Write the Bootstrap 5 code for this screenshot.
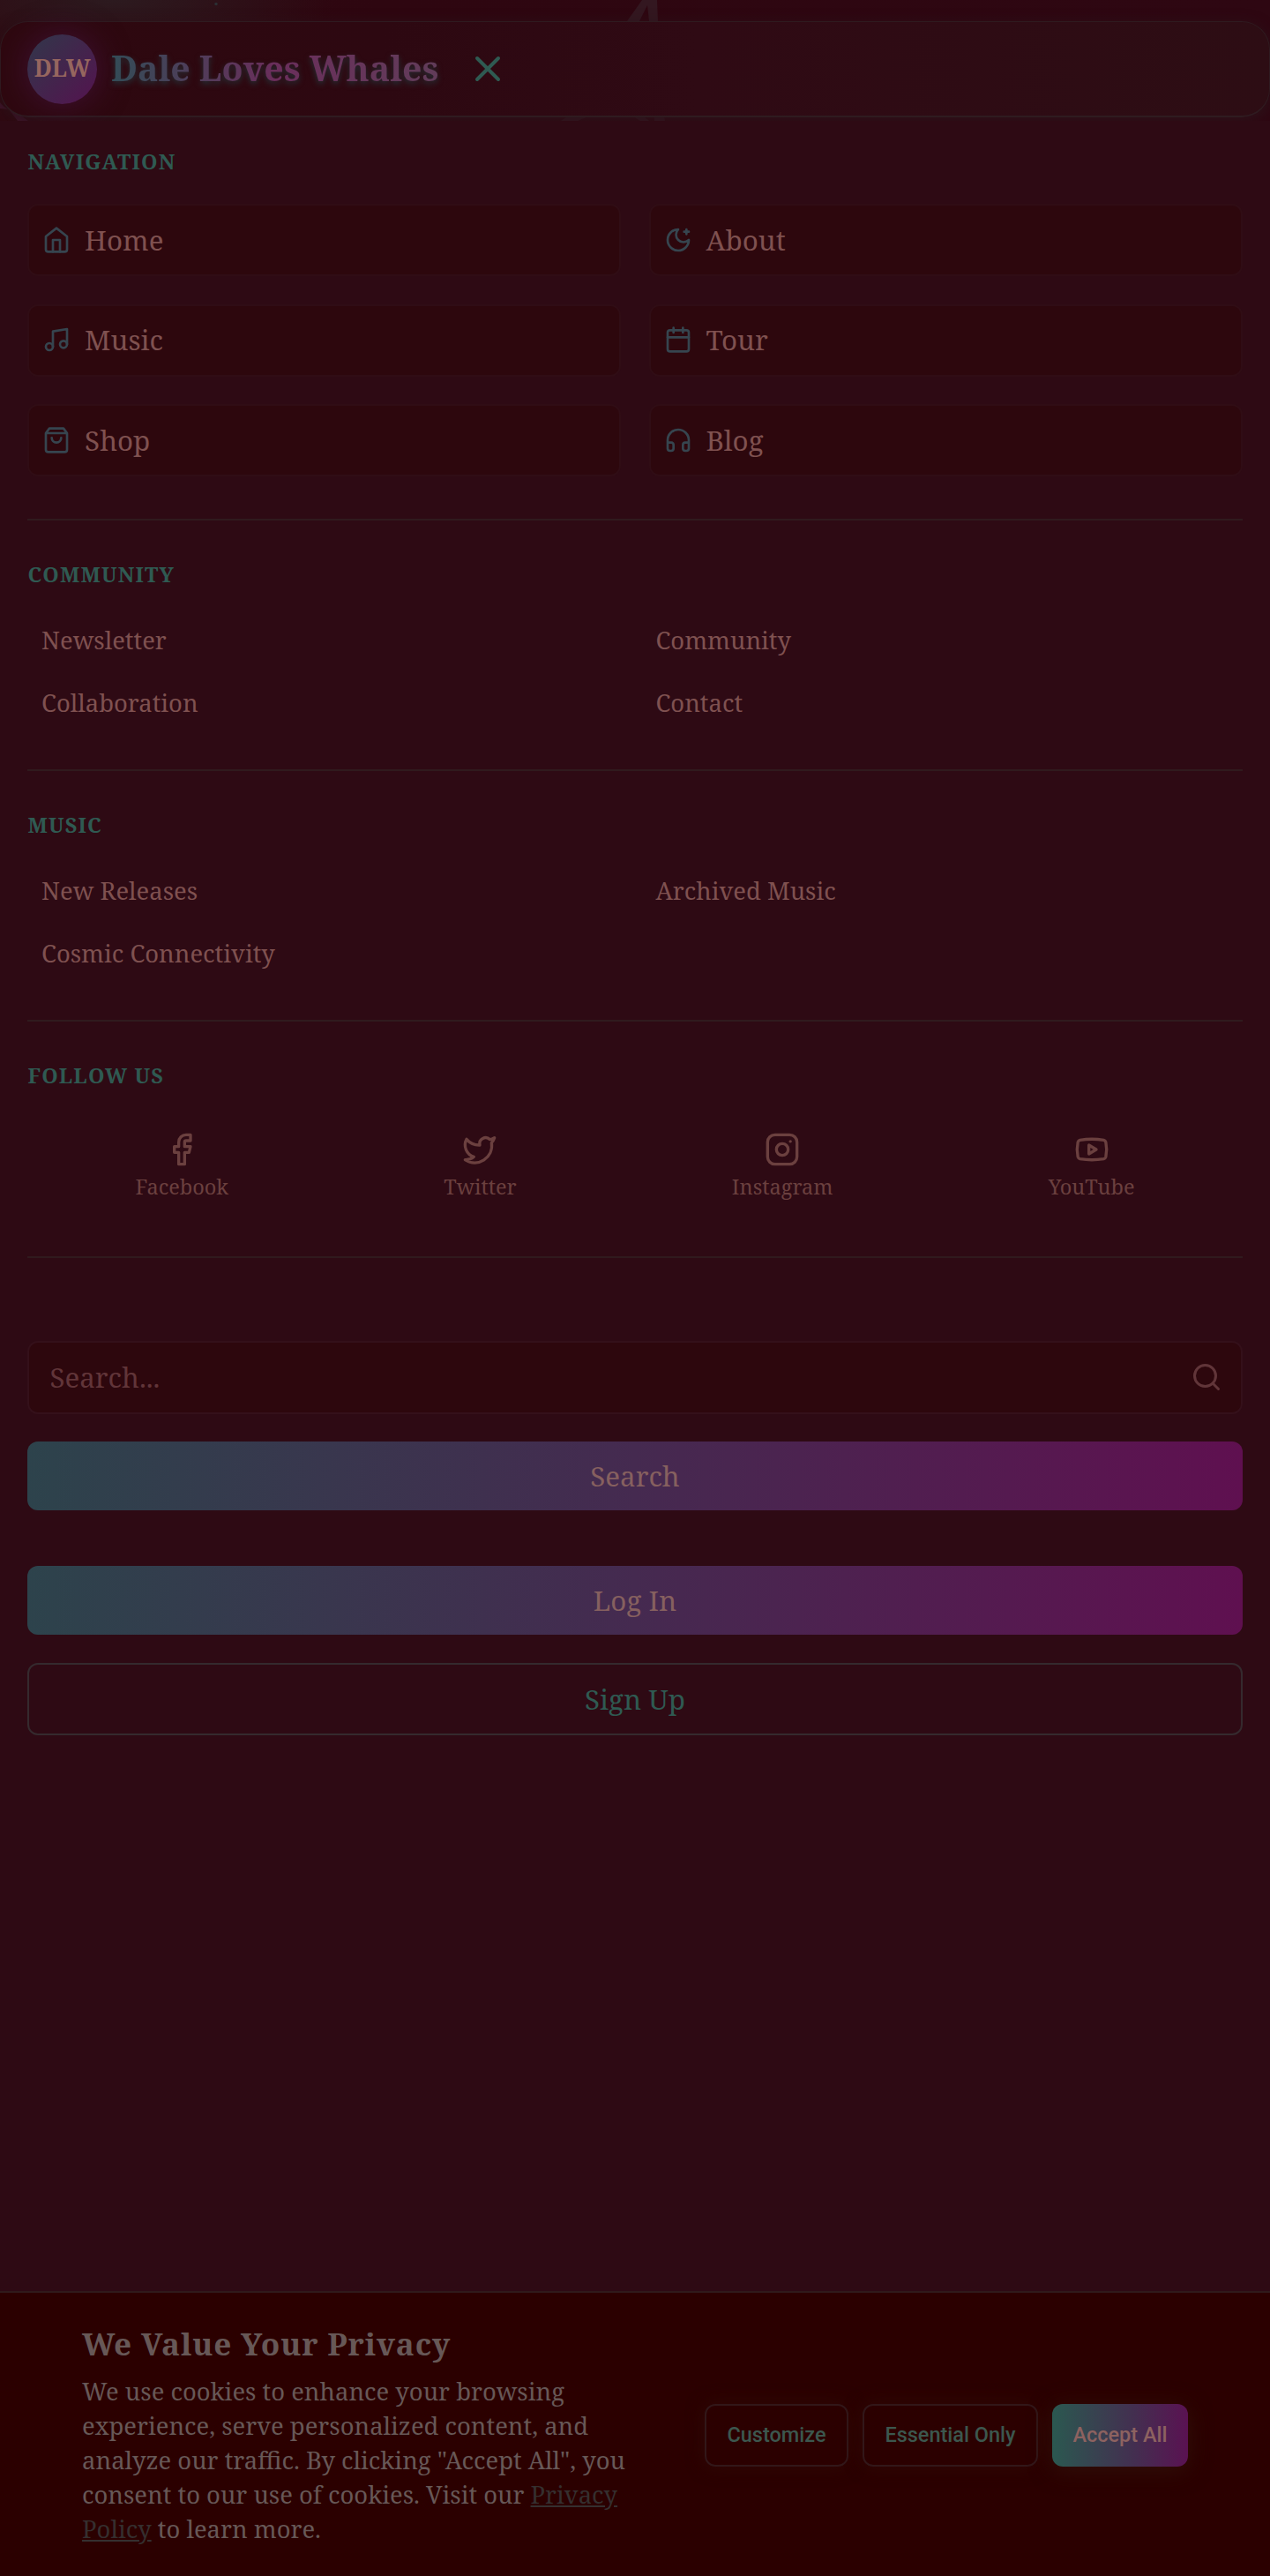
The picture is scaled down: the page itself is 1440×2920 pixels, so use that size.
<!DOCTYPE html>
<html lang="en">
<head>
<meta charset="utf-8">
<meta name="viewport" content="width=device-width, initial-scale=1">
<title>Dale Loves Whales</title>
<link href="https://cdn.jsdelivr.net/npm/bootstrap@5.3.0/dist/css/bootstrap.min.css" rel="stylesheet">
<style>
:root{--teal:#2f5a52;--ink:#7f5150;--dim:#6b403f;--rule:#301a1e;--panel:#2d070d}
body{width:1440px;height:2920px;margin:0;overflow:hidden;color:var(--ink);background:#2e0a14;font-family:"Noto Serif","DejaVu Serif",serif;line-height:1.5}
a{color:inherit;text-decoration:none}
svg{fill:none;stroke:currentColor;stroke-width:2;stroke-linecap:round;stroke-linejoin:round;flex:none;display:block}
.stage{height:137px;padding-top:24px;overflow:hidden;position:relative;background:radial-gradient(ellipse 250px 70px at 130px 0,#2c1a1f,transparent),linear-gradient(90deg,#2f0911,#2e0610 30%,#2e0712)}
.hero-bits{position:absolute;left:0;top:0;stroke:none}
.topbar{height:109px;border:1px solid #2f1b20;border-bottom-width:2px;border-radius:32px;padding:0 30.2px;gap:15.700px;position:relative;background:linear-gradient(90deg,#2e080f 0,#2d0811 30%,#2f0a14 55%,#2d0d14 100%);box-shadow:0 4px 16px #2c131a}
.orb{width:79px;height:79px;border-radius:50%;background:linear-gradient(135deg,#31374a,#54134f);box-shadow:0 0 36px #3f1135;color:#96665f;font-weight:700;font-size:26.200px}
.brand{font-size:39.200px;font-weight:700;line-height:54px;margin-top:-2px;background:linear-gradient(90deg,#334c57,#6a2e5b 50%,#613c59);-webkit-background-clip:text;background-clip:text;color:transparent;filter:drop-shadow(0 3px 3px #243036)}
.closer{color:var(--teal);margin-left:16px}
.sec{padding:0 31.400px}
.sec-inner{border-bottom:2px solid var(--rule);height:284px;padding-top:44px}
.nav-sec{height:453px;padding-top:29px}
.soc-sec{height:268px}
.ttl{font-size:23.500px;font-weight:700;letter-spacing:1.170px;color:var(--teal);line-height:34px;margin:0}
.tiles,.lnks{display:grid;grid-template-columns:1fr 1fr}
.tiles{margin-top:31px;gap:31.500px 31.400px}
.lnks{margin-top:37px;gap:29px 15.600px}
.tile{height:82px;border:2px solid #300d15;border-radius:12px;background:var(--panel);padding:0 15px 1px;gap:15.700px;font-size:31.350px}
.tile svg{color:#36454f}
.lnk{font-size:27.430px;line-height:42px;padding-left:15.700px}
.socs{margin-top:47px}
.soc{font-size:23.500px;line-height:36px;color:var(--dim)}
.search-sec{padding-top:94px}
.finder{height:83px;border:2px solid #34101a;border-radius:12px;background:var(--panel);font-size:31.350px;padding:0 21px 2px 23px;color:#613539}
.wide{height:78px;border-radius:12px;font-size:31.350px;padding-bottom:1px;color:#86605f;background:linear-gradient(90deg,#2d434c,#452a50 50%,#5f1050)}
.wide-line{height:82px;background:none;border:2px solid #352a2e;color:var(--teal);margin-top:32px}
.gap-a{margin-top:31px}.gap-b{margin-top:63px}
.consent{height:323px;border-top:2px solid #301a1b;background:#2b0000;color:#675857;padding:1px 93px 0}
.consent h2{font-size:35.100px;font-weight:700;letter-spacing:.8px;line-height:44px;margin:0 0 13px}
.consent p{font-size:27.430px;line-height:39px;margin:0;width:628px}
.consent p a{color:#352f2f;text-decoration:underline}
.pill{height:71px;border:2px solid #321719;border-radius:12px;font:500 23.500px Roboto,sans-serif;color:#3c574e;box-shadow:0 0 20px #2f0906}
.pill-on{border:0;color:#8d6260;background:linear-gradient(90deg,#2b5850,#432f50 60%,#5a1252);box-shadow:0 4px 26px #301009}
.w-cus{width:163px}.w-ess{width:199px}.w-acc{width:154px}
</style>
</head>
<body class="d-flex flex-column">
<div class="stage">
  <svg class="hero-bits" width="1440" height="137"><path fill="#331720" d="M711 24 728 0h17l1 24h-10l-2-18-9 18zM636 137l7-5h24l-12 5zM718 132h12l6 5h-10zM742 132h11l1 5h-12z"/><path fill="#40152c" d="M0 116c6 8 14 10 20 12l12 9H20L10 124 0 123z"/><circle cx="245" cy="4.500" r="1.700" fill="#2c3034"/></svg>
  <header class="topbar d-flex align-items-center">
    <div class="orb d-flex align-items-center justify-content-center">DLW</div>
    <div class="brand">Dale Loves Whales</div>
    <svg class="closer" width="48" height="48" viewBox="0 0 24 24"><path d="M18 6 6 18M6 6l12 12"/></svg>
  </header>
</div>
<main class="flex-grow-1">
  <section class="sec"><div class="sec-inner nav-sec">
    <h3 class="ttl">NAVIGATION</h3>
    <div class="tiles">
      <a class="tile d-flex align-items-center" href="#"><svg width="32" height="32" viewBox="0 0 24 24"><path d="m3 9 9-7 9 7v11a2 2 0 0 1-2 2H5a2 2 0 0 1-2-2z"/><path d="M9 22V12h6v10"/></svg>Home</a>
      <a class="tile d-flex align-items-center" href="#"><svg width="32" height="32" viewBox="0 0 24 24"><path d="M12 3a6 6 0 0 0 9 9 9 9 0 1 1-9-9ZM19 3v4M21 5h-4"/></svg>About</a>
      <a class="tile d-flex align-items-center" href="#"><svg width="32" height="32" viewBox="0 0 24 24"><path d="M9 18V5l12-2v13"/><circle cx="6" cy="18" r="3"/><circle cx="18" cy="16" r="3"/></svg>Music</a>
      <a class="tile d-flex align-items-center" href="#"><svg width="32" height="32" viewBox="0 0 24 24"><rect x="3" y="4" width="18" height="18" rx="2"/><path d="M16 2v4M8 2v4M3 10h18"/></svg>Tour</a>
      <a class="tile d-flex align-items-center" href="#"><svg width="32" height="32" viewBox="0 0 24 24"><path d="M6 2 3 6v14a2 2 0 0 0 2 2h14a2 2 0 0 0 2-2V6l-3-4ZM3 6h18M16 10a4 4 0 0 1-8 0"/></svg>Shop</a>
      <a class="tile d-flex align-items-center" href="#"><svg width="32" height="32" viewBox="0 0 24 24"><path d="M3 14h3a2 2 0 0 1 2 2v3a2 2 0 0 1-2 2H5a2 2 0 0 1-2-2v-7a9 9 0 0 1 18 0v7a2 2 0 0 1-2 2h-1a2 2 0 0 1-2-2v-3a2 2 0 0 1 2-2h3"/></svg>Blog</a>
    </div>
  </div></section>
  <section class="sec"><div class="sec-inner">
    <h3 class="ttl">COMMUNITY</h3>
    <div class="lnks">
      <a class="lnk" href="#">Newsletter</a><a class="lnk" href="#">Community</a>
      <a class="lnk" href="#">Collaboration</a><a class="lnk" href="#">Contact</a>
    </div>
  </div></section>
  <section class="sec"><div class="sec-inner">
    <h3 class="ttl">MUSIC</h3>
    <div class="lnks">
      <a class="lnk" href="#">New Releases</a><a class="lnk" href="#">Archived Music</a>
      <a class="lnk" href="#">Cosmic Connectivity</a>
    </div>
  </div></section>
  <section class="sec"><div class="sec-inner soc-sec">
    <h3 class="ttl">FOLLOW US</h3>
    <div class="socs d-flex justify-content-around">
      <a class="soc d-flex flex-column align-items-center" href="#"><svg width="40" height="40" viewBox="0 0 24 24"><path d="M18 2h-3a5 5 0 0 0-5 5v3H7v4h3v8h4v-8h3l1-4h-4V7a1 1 0 0 1 1-1h3z"/></svg><span class="mt-1">Facebook</span></a>
      <a class="soc d-flex flex-column align-items-center" href="#"><svg width="40" height="40" viewBox="0 0 24 24"><path d="M22 4s-.7 2.100-2 3.400c1.600 10-9.400 17.300-18 11.600 2.200.1 4.400-.6 6-2C3 15.500.5 9.600 3 5c2.200 2.600 5.600 4.100 9 4-.9-4.200 4-6.600 7-3.800 1.100 0 3-1.200 3-1.200z"/></svg><span class="mt-1">Twitter</span></a>
      <a class="soc d-flex flex-column align-items-center" href="#"><svg width="40" height="40" viewBox="0 0 24 24"><rect x="2" y="2" width="20" height="20" rx="5"/><circle cx="12" cy="12" r="4"/><path d="M17.500 6.500h.01"/></svg><span class="mt-1">Instagram</span></a>
      <a class="soc d-flex flex-column align-items-center" href="#"><svg width="40" height="40" viewBox="0 0 24 24"><path d="M2.500 17a24.120 24.120 0 0 1 0-10 2 2 0 0 1 1.400-1.400 49.560 49.560 0 0 1 16.200 0A2 2 0 0 1 21.500 7a24.120 24.120 0 0 1 0 10 2 2 0 0 1-1.400 1.400 49.550 49.550 0 0 1-16.200 0A2 2 0 0 1 2.500 17"/><path d="m10 15 5-3-5-3z"/></svg><span class="mt-1">YouTube</span></a>
    </div>
  </div></section>
  <section class="sec search-sec">
    <div class="finder d-flex align-items-center justify-content-between"><span>Search...</span><svg width="36" height="36" viewBox="0 0 24 24"><circle cx="11" cy="11" r="8"/><path d="m21 21-4.300-4.300"/></svg></div>
    <a class="wide gap-a d-flex align-items-center justify-content-center" href="#">Search</a>
    <a class="wide gap-b d-flex align-items-center justify-content-center" href="#">Log In</a>
    <a class="wide wide-line d-flex align-items-center justify-content-center" href="#">Sign Up</a>
  </section>
</main>
<footer class="consent d-flex align-items-center justify-content-between">
  <div><h2>We Value Your Privacy</h2>
  <p>We use cookies to enhance your browsing experience, serve personalized content, and analyze our traffic. By clicking "Accept All", you consent to our use of cookies. Visit our <a href="#">Privacy Policy</a> to learn more.</p></div>
  <div class="d-flex gap-3">
    <a class="pill w-cus d-flex align-items-center justify-content-center" href="#">Customize</a>
    <a class="pill w-ess d-flex align-items-center justify-content-center" href="#">Essential Only</a>
    <a class="pill pill-on w-acc d-flex align-items-center justify-content-center" href="#">Accept All</a>
  </div>
</footer>
<script src="https://cdn.jsdelivr.net/npm/bootstrap@5.3.0/dist/js/bootstrap.bundle.min.js"></script>
</body>
</html>
